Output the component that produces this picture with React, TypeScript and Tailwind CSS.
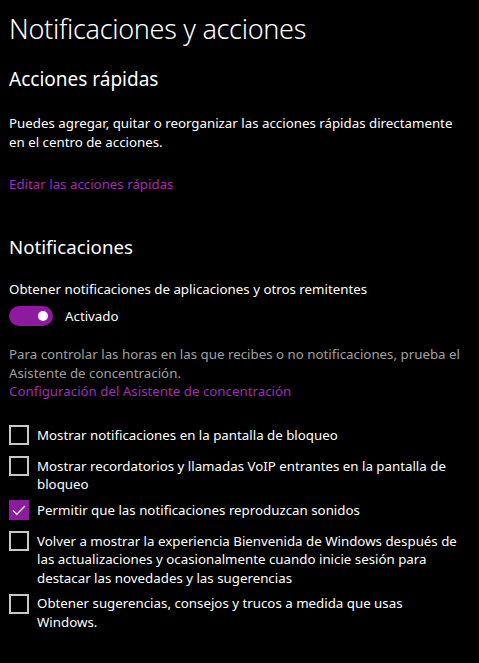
import React from "react";

const checks = [
  { label: "Mostrar notificaciones en la pantalla de bloqueo", on: false },
  { label: "Mostrar recordatorios y llamadas VoIP entrantes en la pantalla de bloqueo", on: false },
  { label: "Permitir que las notificaciones reproduzcan sonidos", on: true },
  {
    label:
      "Volver a mostrar la experiencia Bienvenida de Windows después de las actualizaciones y ocasionalmente cuando inicie sesión para destacar las novedades y las sugerencias",
    on: false,
  },
  { label: "Obtener sugerencias, consejos y trucos a medida que usas Windows.", on: false },
];

function Checkbox({ on }: { on: boolean }) {
  if (on) {
    return (
      <div className="mt-[1.5px] w-5 h-5 shrink-0 bg-[#8e1a9f] flex items-center justify-center">
        <svg width="16" height="16" viewBox="0 0 16 16" fill="none">
          <path d="M2 8.5l3.8 3.8L14 4" stroke="white" strokeWidth="1.3" />
        </svg>
      </div>
    );
  }
  return <div className="mt-[1.5px] w-5 h-5 shrink-0 border-2 border-[#c8c8c8]" />;
}

export default function App() {
  return (
    <div className="min-h-[663px] w-[479px] bg-black text-white font-['Noto_Sans',sans-serif] pl-[9px] pr-[12px] pt-[10px] text-[13.3px] leading-[18.5px]">
      <h1 className="text-[27px] font-light leading-[38px] tracking-[-0.3px]">Notificaciones y acciones</h1>

      <h2 className="mt-[18px] text-[19px] leading-[26px]">Acciones rápidas</h2>
      <p className="mt-[22px]">
        Puedes agregar, quitar o reorganizar las acciones rápidas directamente en el centro de acciones.
      </p>
      <a className="block mt-[24px] text-[#a02cb3]">Editar las acciones rápidas</a>

      <h2 className="mt-[40px] text-[18.7px] leading-[26px]">Notificaciones</h2>
      <p className="mt-[20px]">Obtener notificaciones de aplicaciones y otros remitentes</p>
      <div className="mt-[8px] flex items-center gap-3">
        <div className="w-11 h-5 rounded-full bg-[#8e1a9f] flex items-center justify-end pr-[5px]">
          <div className="w-[10px] h-[10px] rounded-full bg-white" />
        </div>
        <span>Activado</span>
      </div>

      <p className="mt-[19px] text-[#a0a0a0]">
        Para controlar las horas en las que recibes o no notificaciones, prueba el Asistente de concentración.
      </p>
      <a className="block text-[#a02cb3]">Configuración del Asistente de concentración</a>

      <div className="mt-[23px] flex flex-col gap-[5px]">
        {checks.map((c) => (
          <div key={c.label} className="flex items-start gap-2 min-h-[26px]">
            <Checkbox on={c.on} />
            <span className="pt-[2px] pr-[10px]">{c.label}</span>
          </div>
        ))}
      </div>
    </div>
  );
}
